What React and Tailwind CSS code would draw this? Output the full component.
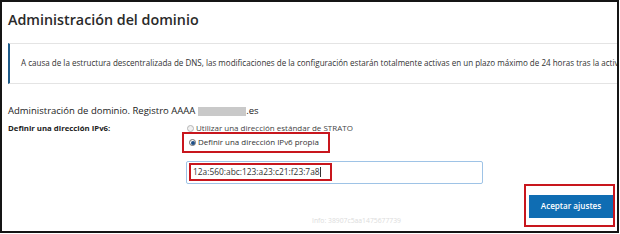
import React from "react";

function Radio({ checked }) {
  return (
    <span
      className={
        "inline-flex items-center justify-center w-[7px] h-[7px] rounded-full border shrink-0 " +
        (checked ? "border-[#6b6b6b] bg-white" : "border-[#b5b5b5] bg-[#f1f1f1]")
      }
    >
      {checked && <span className="w-[4px] h-[4px] rounded-full bg-[#1f4f86]" />}
    </span>
  );
}

export default function App() {
  return (
    <div className="w-[620px] h-[234px] bg-white">
      <div className="w-[619px] h-[233px] border-2 border-[#151515] overflow-hidden font-['Open_Sans',sans-serif] text-[#333]">
        <div className="pl-[6px]">
          <h1 className="pt-[8px] text-[14.3px] leading-[20px] font-semibold text-[#2a2a2a] whitespace-nowrap">
            Administración del dominio
          </h1>
          <div className="mt-[13px] h-[41px] flex items-center border-l-2 border-l-[#1d5a88] border-y border-y-[#e4e4e4] pl-[11px] whitespace-nowrap text-[8.05px] text-[#333]">
            A causa de la estructura descentralizada de DNS, las modificaciones de la configuración estarán totalmente activas en un plazo máximo de 24 horas tras la activación.
          </div>
          <div className="mt-[21px] flex items-center h-[12px] text-[9.5px] leading-[12px] text-[#222] whitespace-nowrap">
            <span>Administración de dominio. Registro AAAA</span>
            <span className="ml-[3px] w-[48px] h-[9px] bg-[#c9c9c9]" />
            <span>.es</span>
          </div>
          <div className="mt-[5px] flex">
            <div className="w-[174px] shrink-0 text-[7.8px] leading-[12px] font-bold text-[#222] whitespace-nowrap">
              Definir una dirección IPv6:
            </div>
            <div className="flex flex-col">
              <div className="flex items-center gap-[2px] pl-[5px] h-[12px] text-[8px] leading-[12px] text-[#444] whitespace-nowrap">
                <Radio />
                <span>Utilizar una dirección estándar de STRATO</span>
              </div>
              <div className="relative -mt-[2px] w-[148px] h-[21px] border-2 border-[#c8161d] bg-white flex items-center gap-[2px] pl-[5px] text-[7.95px] text-[#333] whitespace-nowrap">
                <Radio checked />
                <span>Definir una dirección IPv6 propia</span>
              </div>
              <div className="mt-[8px] ml-[4px] w-[297px] h-[23px] border border-[#9ec3e6] rounded-[2px] bg-white p-[1px] pl-[2px]">
                <div className="w-[143px] h-[18px] border-2 border-[#c8161d] flex items-center pl-[2px] text-[8.4px] text-[#333] whitespace-nowrap">
                  12a:560:abc:123:a23:c21:f23:7a8
                  <span className="w-px h-[10px] bg-[#333]" />
                </div>
              </div>
            </div>
          </div>
          <div className="flex items-end pr-[2px]">
            <div className="ml-[304px] mb-[2px] text-[6.8px] leading-[8px] text-[#dcdcdc] whitespace-nowrap">
              Info: 38907c5aa1475677739
            </div>
            <div className="ml-auto w-[91px] h-[43px] border-2 border-[#c8161d] pl-[3px] pt-[9px]">
              <div className="w-[84px] h-[23px] bg-[#0f6db3] flex items-center justify-center text-white text-[8.1px] font-semibold whitespace-nowrap">
                Aceptar ajustes
              </div>
            </div>
          </div>
        </div>
      </div>
    </div>
  );
}
